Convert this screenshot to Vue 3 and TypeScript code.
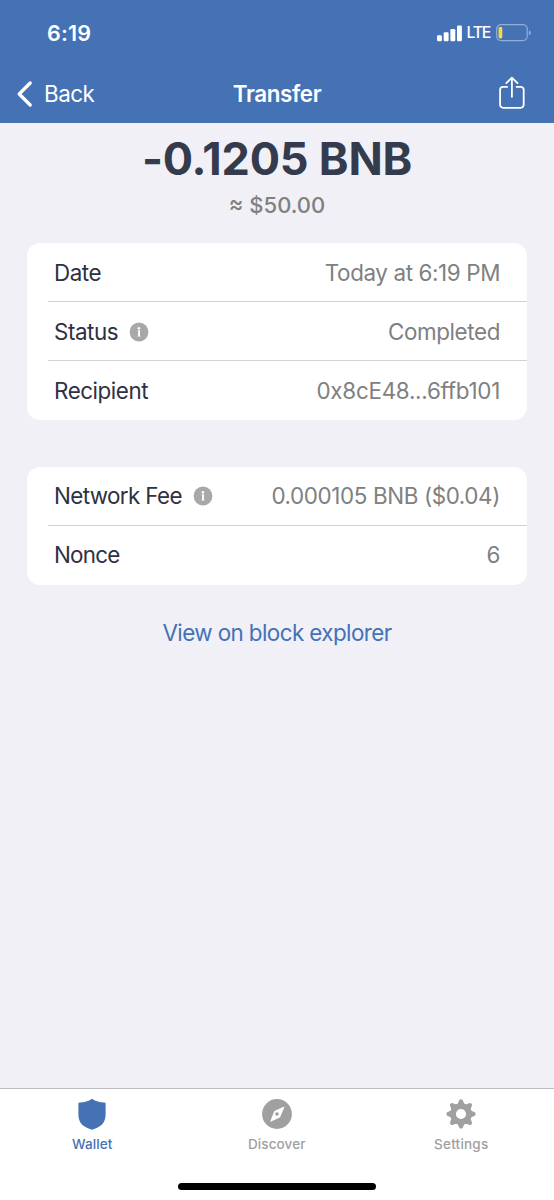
<script setup lang="ts">
interface DetailRow {
  label: string
  value: string
  kind: string
  info?: boolean
}

const groups: DetailRow[][] = [
  [
    { label: 'Date', value: 'Today at 6:19 PM', kind: 'date' },
    { label: 'Status', value: 'Completed', kind: 'status', info: true },
    { label: 'Recipient', value: '0x8cE48...6ffb101', kind: 'recipient' },
  ],
  [
    { label: 'Network Fee', value: '0.000105 BNB ($0.04)', kind: 'fee', info: true },
    { label: 'Nonce', value: '6', kind: 'nonce' },
  ],
]

const teeth: number[] = [0, 45, 90, 135, 180, 225, 270, 315]
</script>

<template>
  <div class="screen">
    <header class="header">
      <div class="status-bar">
        <span class="time">6:19</span>
        <div class="indicators">
          <svg class="signal" width="26" height="17" viewBox="0 0 26 17" fill="#fff">
            <rect x="0" y="10.2" width="4.9" height="6" rx="1.2" />
            <rect x="6.7" y="7.2" width="4.9" height="9" rx="1.2" />
            <rect x="13.4" y="4" width="4.9" height="12.2" rx="1.2" />
            <rect x="20" y="0.4" width="4.9" height="15.8" rx="1.2" />
          </svg>
          <span class="lte">LTE</span>
          <svg class="battery" width="36" height="18" viewBox="0 0 36 18">
            <rect x="0.7" y="0.7" width="30.5" height="16" rx="4.4" fill="none" stroke="#8fafd9" stroke-width="1.2" />
            <rect x="2.6" y="3" width="3.7" height="11.4" rx="1.3" fill="#f5d84b" />
            <path d="M32.9 6.2q2 .8 2 2.6t-2 2.6z" fill="#8fafd9" />
          </svg>
        </div>
      </div>
      <nav class="nav-bar">
        <button class="back" type="button">
          <svg width="18" height="28" viewBox="0 0 18 28" fill="none" stroke="#fff" stroke-width="3.3" stroke-linecap="round" stroke-linejoin="round">
            <path d="M14.2 3L3.2 14l11 11" />
          </svg>
          <span>Back</span>
        </button>
        <h1 class="title">Transfer</h1>
        <button class="share" type="button" aria-label="Share">
          <svg width="28" height="34" viewBox="0 0 28 34" fill="none" stroke="#fff" stroke-width="1.8" stroke-linecap="round" stroke-linejoin="round">
            <path d="M9.2 10.8H5.1a3 3 0 0 0-3 3v15a3 3 0 0 0 3 3h17.6a3 3 0 0 0 3-3V13.800a3 3 0 0 0-3-3h-4.1" />
            <path d="M13.9 20.8V1.8M8.3 7.2l5.6-5.500 5.600 5.500" />
          </svg>
        </button>
      </nav>
    </header>

    <main class="content">
      <section class="summary">
        <div class="amount">-0.1205 BNB</div>
        <div class="fiat">≈ $50.00</div>
      </section>

      <section v-for="(rows, index) in groups" :key="index" class="card">
        <div v-for="row in rows" :key="row.kind" class="row" :class="row.kind">
          <span class="label">{{ row.label }}</span>
          <svg v-if="row.info" class="info" width="20" height="20" viewBox="0 0 20 20">
            <circle cx="10" cy="10" r="9.4" fill="#a8a8a8" />
            <circle cx="9.9" cy="6.2" r="1.3" fill="#fff" />
            <path d="M8.7 8.3H11v5.500h.6v.8H8.500v-.8h.6V9.100h-.4z" fill="#fff" />
          </svg>
          <span class="value">{{ row.value }}</span>
        </div>
      </section>

      <a class="explorer">View on block explorer</a>
    </main>

    <footer class="tab-bar">
      <div class="tabs">
        <div class="tab wallet">
          <svg width="32" height="32" viewBox="0 0 32 32" fill="#4472b5">
            <path d="M16 .8c3.5 2.5 7.7 3.7 12.4 3.8q1.2 0 1.2 1.2v10.4c0 7.2-3.2 10.800-8 13.300-2.100 1-3.800 1.500-5.600 2.300-1.800-.8-3.500-1.300-5.600-2.300-4.800-2.500-8-6.100-8-13.300V5.800q0-1.200 1.200-1.200C8.300 4.500 12.500 3.300 16 .8z" />
          </svg>
          <span>Wallet</span>
        </div>
        <div class="tab discover">
          <svg width="32" height="32" viewBox="0 0 32 32">
            <circle cx="16" cy="16" r="14.9" fill="#a0a0a0" />
            <path d="M22.6 8.7q.9-.3.6.7l-3.600 8.900q-.3.7-1 1.100l-8.400 4.200q-1.200.5-.8-.7l3.600-9.100q.3-.7 1-1.100z" fill="#fff" />
            <circle cx="16" cy="16" r="1.8" fill="#a0a0a0" />
          </svg>
          <span>Discover</span>
        </div>
        <div class="tab settings">
          <svg width="32" height="32" viewBox="0 0 32 32">
            <g transform="translate(16 16)">
              <circle r="7.9" fill="none" stroke="#a0a0a0" stroke-width="5.6" />
              <path
                v-for="angle in teeth"
                :key="angle"
                :transform="`rotate(${angle})`"
                d="M-5.2-8.800Q-2.700-10.300-2.300-12.600-1.900-14.700 0-14.700T2.300-12.600Q2.700-10.300 5.200-8.800z"
                fill="#a0a0a0"
              />
            </g>
          </svg>
          <span>Settings</span>
        </div>
      </div>
      <div class="home-indicator"></div>
    </footer>
  </div>
</template>

<style>
body {
  margin: 0;
}
</style>

<style scoped>
.screen {
  display: flex;
  flex-direction: column;
  width: 554px;
  height: 1200px;
  overflow: hidden;
  background: #f1f0f6;
  font-family: Inter, 'Liberation Sans', sans-serif;
  font-size: 22.4px;
  line-height: 28px;
  color: #2f3142;
  white-space: nowrap;
}

svg {
  display: block;
  flex: none;
}

.header {
  height: 123px;
  flex: none;
  background: #4472b5;
  color: #fff;
}

.status-bar {
  display: flex;
  align-items: center;
  justify-content: space-between;
  height: 66px;
  padding: 0 22px 0 47px;
}

.time {
  font-size: 21.5px;
  font-weight: 600;
  letter-spacing: 0.2px;
}

.indicators {
  display: flex;
  align-items: center;
}

.lte {
  margin: 0 6px 0 4px;
  font-size: 15.8px;
  font-weight: 500;
  letter-spacing: -1.3px;
}

.nav-bar {
  display: grid;
  grid-template-columns: 1fr auto 1fr;
  align-items: center;
  height: 56px;
  padding: 0 28px 0 16px;
}

button {
  display: flex;
  align-items: center;
  padding: 0;
  border: 0;
  background: none;
  color: inherit;
  font: inherit;
}

.back span {
  margin-left: 10px;
  letter-spacing: -0.5px;
}

.title {
  margin: 0 0 0 12px;
  font-size: 22.4px;
  font-weight: 600;
  letter-spacing: -0.38px;
}

.share {
  justify-self: end;
  margin-bottom: 2px;
}

.content {
  flex: 1;
  display: flex;
  flex-direction: column;
  padding: 0 27px;
}

.summary {
  height: 120px;
  text-align: center;
}

.amount {
  padding-top: 9px;
  font-size: 45px;
  line-height: 54px;
  font-weight: 700;
  letter-spacing: -0.2px;
  font-feature-settings: 'calt' 0;
  color: #343b4d;
}

.fiat {
  padding-top: 5px;
  font-size: 22px;
  font-weight: 500;
  color: #808080;
}

.card {
  margin-bottom: 47px;
  border-radius: 13px;
  background: #fff;
}

.row {
  display: flex;
  align-items: center;
  height: 59px;
  margin-left: 21px;
  padding: 0 27px 0 6px;
  box-sizing: border-box;
  border-bottom: 1px solid #d3d3d6;
}

.date,
.status,
.recipient {
  padding-top: 1px;
}

.row:last-child {
  border-bottom-color: transparent;
}

.label {
  letter-spacing: -0.45px;
}

.fee .label {
  letter-spacing: -0.62px;
}

.nonce .label {
  letter-spacing: -0.75px;
}

.info {
  margin-left: 11px;
}

.value {
  margin-left: auto;
  letter-spacing: -0.38px;
  color: #808080;
}

.recipient .value {
  letter-spacing: -0.26px;
  font-feature-settings: 'calt' 0;
}

.explorer {
  align-self: center;
  margin-top: -13px;
  letter-spacing: -0.58px;
  color: #4472b5;
}

.tab-bar {
  height: 112px;
  flex: none;
  box-sizing: border-box;
  border-top: 1px solid #bdbdc1;
  background: #fff;
}

.tabs {
  display: grid;
  grid-template-columns: repeat(3, 184.5px);
  height: 94px;
}

.tab {
  display: flex;
  flex-direction: column;
  align-items: center;
  padding-top: 9px;
  font-size: 13.5px;
  line-height: 18px;
  font-weight: 500;
  letter-spacing: 0.1px;
  color: #a0a0a0;
}

.tab span {
  margin-top: 5px;
}

.settings {
  letter-spacing: 0.22px;
}

.wallet {
  color: #4472b5;
}

.home-indicator {
  width: 198px;
  height: 6.5px;
  margin: 0 auto;
  border-radius: 4px;
  background: #000;
}
</style>
